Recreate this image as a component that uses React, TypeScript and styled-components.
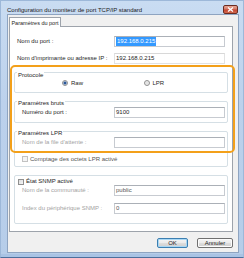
import styled, { createGlobalStyle } from 'styled-components';

const GlobalStyle = createGlobalStyle`
    html, body {
        margin: 0;
        padding: 0;
    }
    body {
        width: 244px;
        height: 258px;
        overflow: hidden;
        font-family: "Liberation Sans", Arial, sans-serif;
        font-size: 6px;
        color: #1e1e1e;
    }
`;

function App() {
    return (
        <>
            <GlobalStyle />
            <WindowStyle>
                <TitleBarStyle>
                    <TitleText>Configuration du moniteur de port TCP/IP standard</TitleText>
                    <CloseButton>
                        <svg width="7" height="5" viewBox="0 0 7 5">
                            <path d="M1 0.5 L6 4.5 M6 0.5 L1 4.5" stroke="#fff" strokeWidth="1.3" />
                        </svg>
                    </CloseButton>
                </TitleBarStyle>
                <ClientArea>
                    <TabStrip>
                        <Tab>Paramètres du port</Tab>
                    </TabStrip>
                    <TabPage>
                        <TopRows>
                            <FieldRow>
                                <FieldLabel>Nom du port :</FieldLabel>
                                <TextBox>
                                    <Selection>192.168.0.215</Selection>
                                </TextBox>
                            </FieldRow>
                            <FieldRow>
                                <FieldLabel>Nom d'imprimante ou adresse IP :</FieldLabel>
                                <TextBox $readOnly>192.168.0.215</TextBox>
                            </FieldRow>
                        </TopRows>

                        <GroupBox $pad="3px 2px 5px 7px">
                            <GroupTitle>Protocole</GroupTitle>
                            <RadioRow>
                                <RadioOption>
                                    <RadioDot $checked />
                                    Raw
                                </RadioOption>
                                <RadioOption>
                                    <RadioDot />
                                    LPR
                                </RadioOption>
                            </RadioRow>
                        </GroupBox>

                        <GroupBox $pad="2px 2px 4px 7px">
                            <GroupTitle>Paramètres bruts</GroupTitle>
                            <FieldRow>
                                <FieldLabel>Numéro du port :</FieldLabel>
                                <TextBox>9100</TextBox>
                            </FieldRow>
                        </GroupBox>

                        <GroupBox $pad="2px 2px 3px 7px">
                            <GroupTitle>Paramètres LPR</GroupTitle>
                            <FieldRow>
                                <FieldLabel $disabled>Nom de la file d'attente :</FieldLabel>
                                <TextBox $disabled />
                            </FieldRow>
                            <CheckRow>
                                <CheckBox $disabled />
                                Comptage des octets LPR activé
                            </CheckRow>
                        </GroupBox>

                        <GroupBox $pad="6px 2px 9px 7px">
                            <GroupTitle>
                                <CheckBox />
                                État SNMP activé
                            </GroupTitle>
                            <SnmpRows>
                                <FieldRow>
                                    <FieldLabel $disabled>Nom de la communauté :</FieldLabel>
                                    <TextBox $disabled>public</TextBox>
                                </FieldRow>
                                <FieldRow>
                                    <FieldLabel $disabled>Index du périphérique SNMP :</FieldLabel>
                                    <TextBox $disabled>0</TextBox>
                                </FieldRow>
                            </SnmpRows>
                        </GroupBox>

                        {/* cadre orange de mise en évidence */}
                        <Highlight />
                    </TabPage>
                    <ButtonRow>
                        <DialogButton $default $width={31}>OK</DialogButton>
                        <DialogButton $width={36}>Annuler</DialogButton>
                    </ButtonRow>
                </ClientArea>
            </WindowStyle>
        </>
    );
}

const WindowStyle = styled.div`
    width: 244px;
    height: 258px;
    box-sizing: border-box;
    display: flex;
    flex-direction: column;
    padding: 0 4px 4px 6px;
    background: linear-gradient(180deg, #c9dcf2 0%, #bcd1ec 40%, #b6cde9 100%);
    border: 1px solid #9db8d9;
    border-bottom-color: #4c6f9c;
    box-shadow: inset 0 -3px 0 #a9c3e4;
`;

const TitleBarStyle = styled.div`
    height: 16px;
    display: flex;
    align-items: flex-start;
`;

const TitleText = styled.span`
    margin-top: 6px;
    line-height: 7px;
    color: #1a1a1a;
    white-space: nowrap;
`;

const CloseButton = styled.div`
    margin-left: auto;
    margin-top: 4px;
    margin-right: 1px;
    width: 15px;
    height: 9px;
    box-sizing: border-box;
    display: flex;
    align-items: center;
    justify-content: center;
    border: 1px solid #6b2c22;
    border-radius: 2px;
    background: linear-gradient(180deg, #e7a594 0%, #d57a68 45%, #c4432f 55%, #d26a4f 100%);
`;

const ClientArea = styled.div`
    flex: 1;
    display: flex;
    flex-direction: column;
    padding: 2px 5px 4px 1px;
    background: #f0f0f0;
    border: 1px solid #8ea4c1;
    box-sizing: border-box;
`;

const TabStrip = styled.div`
    display: flex;
    height: 9px;
`;

const Tab = styled.div`
    width: 52px;
    height: 10px;
    box-sizing: border-box;
    display: flex;
    align-items: center;
    justify-content: center;
    background: #fff;
    border: 1px solid #9da3ab;
    border-bottom: none;
    position: relative;
    z-index: 1;
    font-size: 5.5px;
`;

const TabPage = styled.div`
    position: relative;
    height: 206px;
    box-sizing: border-box;
    display: flex;
    flex-direction: column;
    padding: 9px 4px 0 4px;
    background: #fff;
    border: 1px solid #9da3ab;
`;

const TopRows = styled.div`
    display: flex;
    flex-direction: column;
    gap: 6px;
    padding: 0 3px;
    margin-bottom: 8px;
`;

const FieldRow = styled.div`
    display: grid;
    grid-template-columns: 1fr 111px;
    align-items: center;
    height: 11px;
`;

const FieldLabel = styled.span<{ $disabled?: boolean }>`
    color: ${({ $disabled }) => ($disabled ? '#a3a3a3' : '#1e1e1e')};
    white-space: nowrap;
    line-height: 7px;
`;

interface TextBoxProps {
    $readOnly?: boolean;
    $disabled?: boolean;
}

const TextBox = styled.div<TextBoxProps>`
    height: 11px;
    box-sizing: border-box;
    display: flex;
    align-items: center;
    padding: 0 1px;
    background: #fff;
    border: 1px solid ${({ $readOnly }) => ($readOnly ? '#e2e2e2' : '#c7cbd1')};
    border-top-color: ${({ $readOnly }) => ($readOnly ? '#d8d8d8' : '#abb0b7')};
    color: ${({ $disabled }) => ($disabled ? '#555' : '#1e1e1e')};
    white-space: nowrap;
    line-height: 7px;
`;

const Selection = styled.span`
    background: #3399ff;
    color: #fff;
    padding: 1px 1px;
`;

const GroupBox = styled.div<{ $pad: string }>`
    display: flex;
    flex-direction: column;
    padding: ${({ $pad }) => $pad};
    margin-bottom: 8px;
    border: 1px solid #d5dfe5;
    border-radius: 2px;
`;

const GroupTitle = styled.div`
    align-self: flex-start;
    display: flex;
    align-items: center;
    gap: 2px;
    height: 7px;
    line-height: 7px;
    margin: -4px 0 0 -5px;
    padding: 0 1px;
    background: #fff;
    color: #1e1e1e;
    white-space: nowrap;
`;

const RadioRow = styled.div`
    display: flex;
    height: 8px;
    align-items: center;
    padding-left: 40px;
`;

const RadioOption = styled.div`
    width: 88px;
    display: flex;
    align-items: center;
    gap: 3px;
`;

const RadioDot = styled.span<{ $checked?: boolean }>`
    width: 6px;
    height: 6px;
    box-sizing: border-box;
    border-radius: 50%;
    border: 1px solid #8f8f8f;
    background: ${({ $checked }) =>
        $checked
            ? 'radial-gradient(circle, #1d3f77 0, #3a6cb4 1.3px, #d8dfe6 1.8px, #eef1f4 100%)'
            : 'radial-gradient(circle, #dedede 0, #f4f4f4 100%)'};
`;

const CheckRow = styled.div`
    display: flex;
    align-items: center;
    gap: 2px;
    height: 8px;
    margin-top: 7px;
    color: #555;
`;

const CheckBox = styled.span<{ $disabled?: boolean }>`
    width: 6px;
    height: 6px;
    box-sizing: border-box;
    border: 1px solid ${({ $disabled }) => ($disabled ? '#c2c2c2' : '#8f8f8f')};
    background: ${({ $disabled }) =>
        $disabled ? '#f4f4f4' : 'linear-gradient(135deg, #dcdcdc, #f6f6f6)'};
`;

const SnmpRows = styled.div`
    display: flex;
    flex-direction: column;
    gap: 7px;
`;

const Highlight = styled.div`
    position: absolute;
    left: 0;
    top: 38px;
    width: 225px;
    height: 88px;
    box-sizing: border-box;
    border: 2px solid #f3a01a;
    border-radius: 5px;
    pointer-events: none;
`;

const ButtonRow = styled.div`
    display: flex;
    justify-content: flex-end;
    gap: 9px;
    margin-top: 6px;
`;

const DialogButton = styled.div<{ $default?: boolean; $width: number }>`
    width: ${({ $width }) => $width}px;
    height: 10px;
    box-sizing: border-box;
    display: flex;
    align-items: center;
    justify-content: center;
    border: 1px solid ${({ $default }) => ($default ? '#3c7fb1' : '#707070')};
    border-radius: 2px;
    background: linear-gradient(180deg, #f4f4f4 0%, #ebebeb 48%, #dddddd 52%, #cfcfcf 100%);
    box-shadow: ${({ $default }) => ($default ? 'inset 0 0 0 1px #a9d8f5' : 'inset 0 0 0 1px #fcfcfc')};
    color: #1e1e1e;
    line-height: 7px;
`;

export default App;
